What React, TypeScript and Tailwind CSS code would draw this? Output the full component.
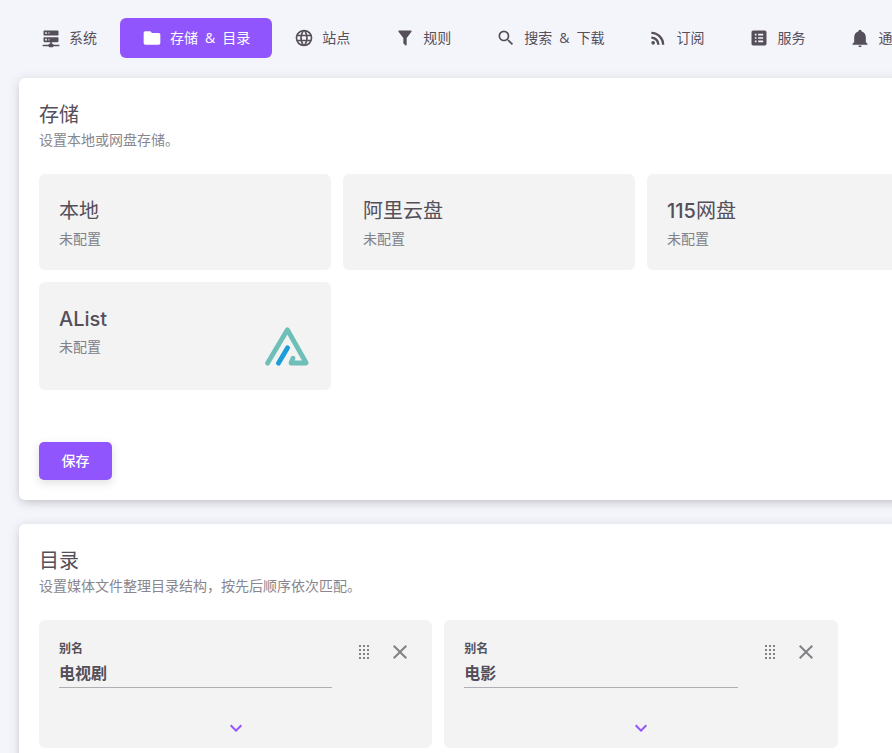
import React, { useState } from 'react'
import clsx from 'clsx'

const icons = {
  server:
    'M13 19H14A1 1 0 0 1 15 20H22V22H15A1 1 0 0 1 14 23H10A1 1 0 0 1 9 22H2V20H9A1 1 0 0 1 10 19H11V17H4A1 1 0 0 1 3 16V12A1 1 0 0 1 4 11H20A1 1 0 0 1 21 12V16A1 1 0 0 1 20 17H13V19M4 3H20A1 1 0 0 1 21 4V8A1 1 0 0 1 20 9H4A1 1 0 0 1 3 8V4A1 1 0 0 1 4 3M9 7H10V5H9V7M9 15H10V13H9V15M5 5V7H7V5H5M5 13V15H7V13H5Z',
  folder: 'M10,4H4C2.89,4 2,4.89 2,6V18A2,2 0 0,0 4,20H20A2,2 0 0,0 22,18V8C22,6.89 21.1,6 20,6H12L10,4Z',
  web: 'M16.36,14C16.44,13.34 16.5,12.68 16.5,12C16.5,11.32 16.44,10.66 16.36,10H19.74C19.9,10.64 20,11.31 20,12C20,12.69 19.9,13.36 19.74,14M14.59,19.56C15.19,18.45 15.65,17.25 15.97,16H18.92C17.96,17.65 16.43,18.93 14.59,19.56M14.34,14H9.66C9.56,13.34 9.5,12.68 9.5,12C9.5,11.32 9.56,10.65 9.66,10H14.34C14.43,10.65 14.5,11.32 14.5,12C14.5,12.68 14.43,13.34 14.34,14M12,19.96C11.17,18.76 10.5,17.43 10.09,16H13.91C13.5,17.43 12.83,18.76 12,19.96M8,8H5.08C6.03,6.34 7.57,5.06 9.4,4.44C8.8,5.55 8.35,6.75 8,8M5.08,16H8C8.35,17.25 8.8,18.45 9.4,19.56C7.57,18.93 6.03,17.65 5.08,16M4.26,14C4.1,13.36 4,12.69 4,12C4,11.31 4.1,10.64 4.26,10H7.64C7.56,10.66 7.5,11.32 7.5,12C7.5,12.68 7.56,13.34 7.64,14M12,4.03C12.83,5.23 13.5,6.57 13.91,8H10.09C10.5,6.57 11.17,5.23 12,4.03M18.92,8H15.97C15.65,6.75 15.19,5.55 14.59,4.44C16.43,5.07 17.96,6.34 18.92,8M12,2C6.47,2 2,6.5 2,12A10,10 0 0,0 12,22A10,10 0 0,0 22,12A10,10 0 0,0 12,2Z',
  filter:
    'M14,12V19.88C14.04,20.18 13.94,20.5 13.71,20.71C13.32,21.1 12.69,21.1 12.3,20.71L10.29,18.7C10.06,18.47 9.96,18.16 10,17.87V12H9.97L4.21,4.62C3.87,4.19 3.95,3.56 4.38,3.22C4.57,3.08 4.78,3 5,3V3H19V3C19.22,3 19.43,3.08 19.62,3.22C20.05,3.56 20.13,4.19 19.79,4.62L14.03,12H14Z',
  magnify:
    'M9.5,3A6.5,6.5 0 0,1 16,9.5C16,11.11 15.41,12.59 14.44,13.73L14.71,14H15.5L20.5,19L19,20.5L14,15.5V14.71L13.73,14.44C12.59,15.41 11.11,16 9.5,16A6.5,6.5 0 0,1 3,9.5A6.5,6.5 0 0,1 9.5,3M9.5,5C7,5 5,7 5,9.5C5,12 7,14 9.5,14C12,14 14,12 14,9.5C14,7 12,5 9.5,5Z',
  rss: 'M6.18,15.64A2.18,2.18 0 0,1 8.36,17.82C8.36,19 7.38,20 6.18,20C5,20 4,19 4,17.82A2.18,2.18 0 0,1 6.18,15.64M4,4.44A15.56,15.56 0 0,1 19.56,20H16.73A12.73,12.73 0 0,0 4,7.27V4.44M4,10.1A9.9,9.9 0 0,1 13.9,20H11.07A7.07,7.07 0 0,0 4,12.93V10.1Z',
  listBox:
    'M19 3H5C3.9 3 3 3.9 3 5V19C3 20.1 3.9 21 5 21H19C20.1 21 21 20.1 21 19V5C21 3.9 20.1 3 19 3M7 7H9V9H7V7M7 11H9V13H7V11M7 15H9V17H7V15M17 17H11V15H17V17M17 13H11V11H17V13M17 9H11V7H17V9Z',
  bell: 'M21,19V20H3V19L5,17V11C5,7.9 7.03,5.17 10,4.29C10,4.19 10,4.1 10,4A2,2 0 0,1 12,2A2,2 0 0,1 14,4C14,4.1 14,4.19 14,4.29C16.97,5.17 19,7.9 19,11V17L21,19M14,21A2,2 0 0,1 12,23A2,2 0 0,1 10,21',
  drag: 'M7,19V17H9V19H7M11,19V17H13V19H11M15,19V17H17V19H15M7,15V13H9V15H7M11,15V13H13V15H11M15,15V13H17V15H15M7,11V9H9V11H7M11,11V9H13V11H11M15,11V9H17V11H15M7,7V5H9V7H7M11,7V5H13V7H11M15,7V5H17V7H15Z',
  close:
    'M19,6.41L17.59,5L12,10.59L6.41,5L5,6.41L10.59,12L5,17.59L6.41,19L12,13.41L17.59,19L19,17.59L13.41,12L19,6.41Z',
  chevronDown: 'M7.41,8.58L12,13.17L16.59,8.58L18,10L12,16L6,10L7.41,8.58Z',
}

type IconName = keyof typeof icons

function Icon({ name, className }: { name: IconName; className?: string }) {
  return (
    <svg viewBox="0 0 24 24" fill="currentColor" aria-hidden="true" className={clsx('shrink-0', className)}>
      <path d={icons[name]} />
    </svg>
  )
}

function AListLogo() {
  return (
    <svg viewBox="0 0 48 48" fill="none" aria-hidden="true" className="mt-5 size-12 shrink-0">
      <g strokeWidth="4.8" strokeLinecap="round" strokeLinejoin="round">
        <path d="M4.5 41.2L24.4 7.8L43.2 41H28L30 36.2" stroke="#6ebfb8" />
        <path d="M15.4 41.2L24.6 25.8" stroke="#1c9dd8" />
      </g>
    </svg>
  )
}

const tabs: { icon: IconName; words: string[] }[] = [
  { icon: 'server', words: ['系统'] },
  { icon: 'folder', words: ['存储', '&', '目录'] },
  { icon: 'web', words: ['站点'] },
  { icon: 'filter', words: ['规则'] },
  { icon: 'magnify', words: ['搜索', '&', '下载'] },
  { icon: 'rss', words: ['订阅'] },
  { icon: 'listBox', words: ['服务'] },
  { icon: 'bell', words: ['通知'] },
]

function SettingTabs() {
  const [active, setActive] = useState(1)

  return (
    <nav className="flex">
      {tabs.map((tab, index) => (
        <button
          key={tab.icon}
          type="button"
          onClick={() => setActive(index)}
          className={clsx(
            'flex h-10 min-w-[101px] shrink-0 items-center gap-2 rounded-md px-[22px] text-sm',
            index === active && 'bg-[#9155fd] text-white',
          )}
        >
          <Icon name={tab.icon} className="size-5" />
          <span className="flex gap-[7px] font-['Open_Sans','Noto_Sans_CJK_SC',sans-serif]">
            {tab.words.map((word) => (
              <span key={word}>{word}</span>
            ))}
          </span>
        </button>
      ))}
    </nav>
  )
}

interface PanelProps {
  title: string
  subtitle: string
  children: React.ReactNode
}

function Panel({ title, subtitle, children }: PanelProps) {
  return (
    <section className="rounded-md bg-white p-5 shadow-[0_4px_8px_-4px_rgba(58,53,65,0.2),0_2px_12px_rgba(58,53,65,0.16)]">
      <h2 className="text-xl leading-[34px]">{title}</h2>
      <p className="text-sm leading-4 text-[#89868d]">{subtitle}</p>
      <div className="mt-[26px]">{children}</div>
    </section>
  )
}

interface StorageCardProps {
  name: React.ReactNode
  logo?: React.ReactNode
  className?: string
}

function StorageCard({ name, logo, className }: StorageCardProps) {
  return (
    <div className={clsx('flex justify-between rounded-md bg-[#f3f3f3] p-5', className)}>
      <div>
        <h3 className="text-xl leading-[34px]">{name}</h3>
        <p className="text-sm leading-[22px] text-[#838086]">未配置</p>
      </div>
      {logo}
    </div>
  )
}

function DirectoryCard({ id, name }: { id: string; name: string }) {
  return (
    <div className="rounded-md bg-[#f3f3f3] pt-3.5 pb-2">
      <div className="flex gap-3.5 pr-3.5 pl-5">
        <div className="flex min-w-0 flex-1 flex-col pt-1">
          <label htmlFor={id} className="text-xs leading-[22px] font-bold">
            别名
          </label>
          <input
            id={id}
            defaultValue={name}
            className="h-7 w-full border-b border-[#b0aeb3] bg-transparent pb-1 font-bold outline-none"
          />
        </div>
        <div className="flex text-[#838086]">
          <button type="button" aria-label="拖动" className="flex size-9 items-center justify-center">
            <Icon name="drag" className="size-6" />
          </button>
          <button type="button" aria-label="删除" className="flex size-9 items-center justify-center">
            <Icon name="close" className="size-6" />
          </button>
        </div>
      </div>
      <button type="button" aria-label="展开" className="mx-auto mt-7 block text-[#9155fd]">
        <Icon name="chevronDown" className="size-6" />
      </button>
    </div>
  )
}

export default function App() {
  return (
    <div className="h-screen overflow-hidden bg-[#f4f5fa] font-['Inter','Noto_Sans_CJK_SC',sans-serif] text-[#544f5a]">
      <main className="flex min-w-[1282px] flex-col px-[19px] pt-[18px]">
        <SettingTabs />

        <div className="mt-5 flex flex-col gap-6">
          <Panel title="存储" subtitle="设置本地或网盘存储。">
            <div className="grid grid-cols-4 gap-3">
              <StorageCard name="本地" />
              <StorageCard name="阿里云盘" />
              <StorageCard
                name={
                  <>
                    <span className="font-medium">115</span>网盘
                  </>
                }
              />
              <StorageCard
                name={<span className="font-medium">AList</span>}
                logo={<AListLogo />}
                className="col-start-1"
              />
            </div>
            <button
              type="button"
              className="mt-[52px] block h-[38px] min-w-[73px] rounded-[5px] bg-[#9155fd] px-[22px] text-sm font-medium text-white shadow-[0_3px_10px_rgba(58,53,65,0.16)]"
            >
              保存
            </button>
          </Panel>

          <Panel title="目录" subtitle="设置媒体文件整理目录结构，按先后顺序依次匹配。">
            <div className="grid grid-cols-3 gap-3">
              <DirectoryCard id="dir-tv" name="电视剧" />
              <DirectoryCard id="dir-movie" name="电影" />
            </div>
          </Panel>
        </div>
      </main>
    </div>
  )
}
